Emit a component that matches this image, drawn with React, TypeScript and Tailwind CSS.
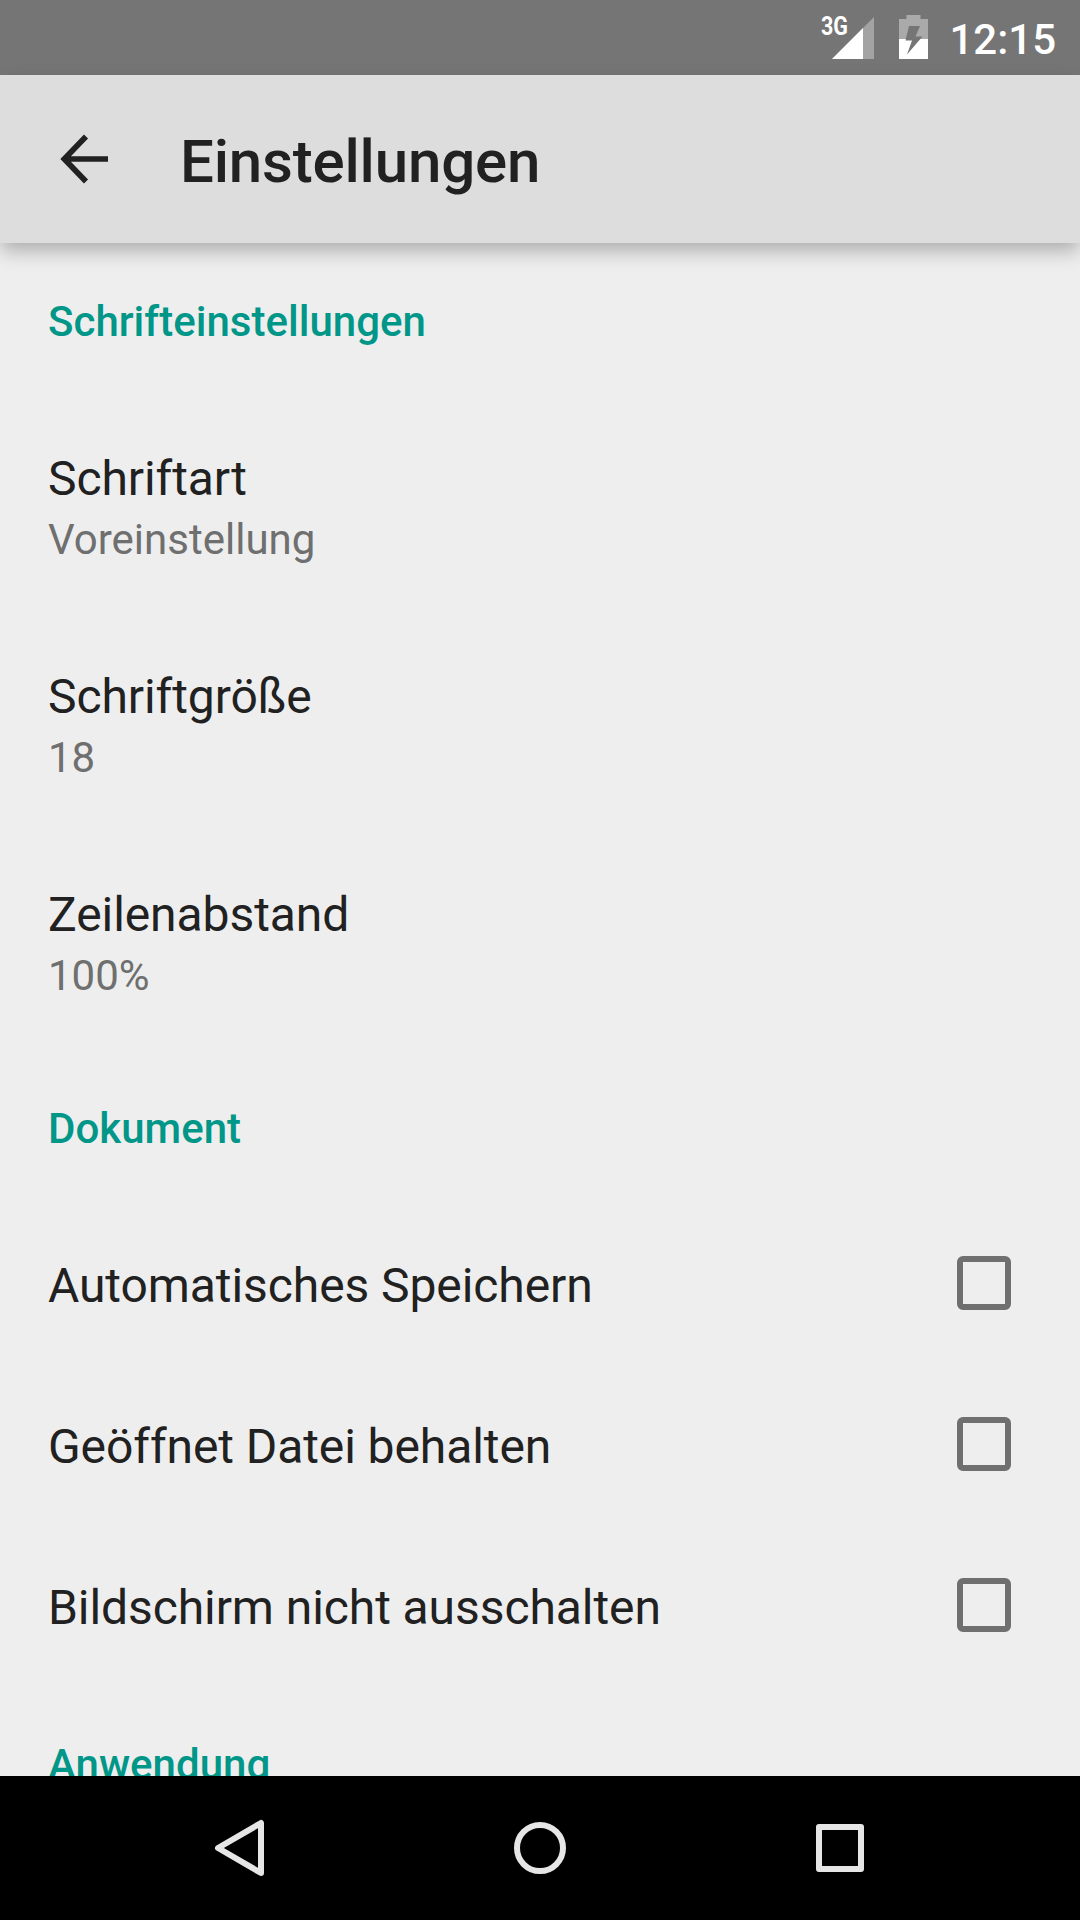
import { useState } from 'react';

const fontItems = [
    { title: 'Schriftart', summary: 'Voreinstellung' },
    { title: 'Schriftgröße', summary: '18' },
    { title: 'Zeilenabstand', summary: '100%' },
];

const documentItems = ['Automatisches Speichern', 'Geöffnet Datei behalten', 'Bildschirm nicht ausschalten'];

function StatusBar() {
    return (
        <div className="flex h-[75px] shrink-0 items-center justify-end bg-[#757575] pr-[24px] text-white">
            {/* Signal */}
            <svg width="56" height="75" viewBox="820 0 56 75" className="mr-[23px]">
                <path d="M832 59L874 17V59Z" fill="#a3a3a3" />
                <path d="M832 59L863 28V59Z" fill="#fff" />
                <text x="821" y="35" fontSize="25" fontWeight="700" textLength="27" lengthAdjust="spacingAndGlyphs" fill="#fff">3G</text>
            </svg>
            {/* Battery */}
            <svg width="29" height="75" viewBox="899 0 29 75" className="mr-[21px]">
                <path d="M899 19H906.500V15H920.500V19H928V59H899Z" fill="#aaa" />
                <path d="M899 39H928V59H899Z" fill="#fff" />
                <path d="M909 26H920L915.500 36.500H922.500L907 54.500L912 40.500H905.500Z" fill="#757575" />
            </svg>
            <span className="pt-[4px] text-[42px] leading-[50px] font-medium">12:15</span>
        </div>
    );
}

function SectionTitle({ children }: { children: string }) {
    return (
        <h2 className="h-[153px] shrink-0 px-12 pt-[54px] text-[42px] leading-[50px] font-medium tracking-[0.02px] text-[#009688]">{children}</h2>
    );
}

function CheckRow({ label }: { label: string }) {
    const [checked, setChecked] = useState(false);

    return (
        <button
            type="button"
            role="checkbox"
            aria-checked={checked}
            onClick={() => setChecked(!checked)}
            className="flex h-[161px] shrink-0 items-center justify-between pr-[69px] pl-12 text-left"
        >
            <span className="pt-1 text-5xl leading-[56px] tracking-[-0.08px]">{label}</span>
            <span className={`mb-[2px] size-[54px] rounded-md border-6 border-[#6f6f6f] ${checked ? 'bg-[#009688]' : ''}`} />
        </button>
    );
}

export default function App() {
    return (
        <div className="flex h-[1920px] w-[1080px] flex-col overflow-hidden bg-[#eeeeee] font-[Roboto,sans-serif] text-[#212121]">
            <StatusBar />

            {/* Toolbar */}
            <header className="z-10 flex h-[168px] shrink-0 items-center bg-[#dddddd] pl-[60px] shadow-[0_9px_18px_-1px_rgba(0,0,0,0.27)]">
                <svg width="48" height="50" viewBox="60 134 48 50" fill="none" stroke="#212121" strokeWidth="5.700">
                    <path d="M108 159H65M86 136.500L64.300 159L86 181.500" />
                </svg>
                <h1 className="ml-[72px] pt-[5px] text-6xl leading-[70px] font-medium tracking-[-0.18px]">Einstellungen</h1>
            </header>

            {/* Preferences */}
            <main className="flex min-h-0 flex-1 flex-col overflow-hidden">
                <SectionTitle>Schrifteinstellungen</SectionTitle>
                {fontItems.map((item) => (
                    <div key={item.title} className="h-[218px] shrink-0 px-12 pt-[55px]">
                        <p className="text-5xl leading-[56px] tracking-[-0.08px]">{item.title}</p>
                        <p className="mt-2 text-[42px] leading-[50px] text-[#6f6f6f]">{item.summary}</p>
                    </div>
                ))}
                <SectionTitle>Dokument</SectionTitle>
                {documentItems.map((label) => (
                    <CheckRow key={label} label={label} />
                ))}
                <SectionTitle>Anwendung</SectionTitle>
            </main>

            {/* Navigation bar */}
            <nav className="flex h-36 shrink-0 items-center justify-center gap-[204px] bg-black">
                <svg width="96" height="96" viewBox="192 1800 96 96" fill="none" stroke="#e6e6e6" strokeWidth="6" strokeLinejoin="round">
                    <path d="M261 1823V1873L218 1848Z" />
                </svg>
                <svg width="96" height="96" viewBox="492 1800 96 96" fill="none" stroke="#e6e6e6" strokeWidth="6">
                    <circle cx="540" cy="1848" r="23" />
                </svg>
                <svg width="96" height="96" viewBox="792 1800 96 96" fill="none" stroke="#e6e6e6" strokeWidth="6" strokeLinejoin="round">
                    <path d="M819 1827H861V1869H819Z" />
                </svg>
            </nav>
        </div>
    );
}
